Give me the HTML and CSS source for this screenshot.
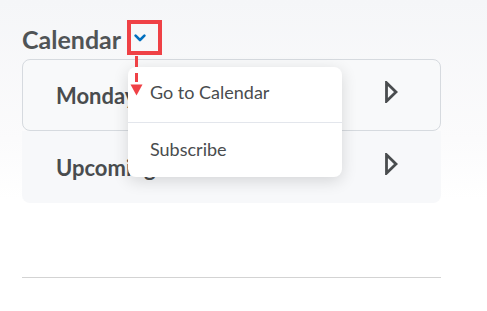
FILE: index.html
```html
<!DOCTYPE html>
<html lang="en">
<head>
<meta charset="utf-8">
<title>Calendar</title>
<link rel="stylesheet" href="styles.css">
</head>
<body>
<div class="page">
  <div class="header">
    <h2 class="title">Calendar</h2>
    <button class="menu-btn" aria-label="Calendar options">
      <svg width="12" height="8" viewBox="0 0 12 8"><path d="M1.6 1.6 L6 6 L10.4 1.6" fill="none" stroke="#006fbf" stroke-width="2.6" stroke-linecap="round" stroke-linejoin="round"/></svg>
    </button>
  </div>
  <div class="list">
    <div class="row row-first">
      <span class="row-label">Monday, June 5</span>
      <svg class="tri" width="13" height="22" viewBox="0 0 13 22"><path d="M1.5 1.8 L11 11 L1.5 20.2 Z" fill="none" stroke="#494c4e" stroke-width="2.8" stroke-linejoin="miter"/></svg>
    </div>
    <div class="row row-second">
      <span class="row-label">Upcoming Events</span>
      <svg class="tri" width="13" height="22" viewBox="0 0 13 22"><path d="M1.5 1.8 L11 11 L1.5 20.2 Z" fill="none" stroke="#494c4e" stroke-width="2.8" stroke-linejoin="miter"/></svg>
    </div>
  </div>
  <div class="divider"></div>

  <div class="menu">
    <div class="menu-item">Go to Calendar</div>
    <div class="menu-item">Subscribe</div>
  </div>

  <div class="annot-box"></div>
  <svg class="annot-arrow" width="14" height="40" viewBox="0 0 14 40">
    <line x1="6.5" y1="0" x2="6.5" y2="29" stroke="#ef4146" stroke-width="3" stroke-dasharray="11 6 9 3"/>
    <polygon points="0.5,28.5 12.5,28.5 6.5,39.5" fill="#ef4146"/>
  </svg>
</div>
</body>
</html>
```

FILE: styles.css
```css
html, body {
  margin: 0;
  padding: 0;
}
body {
  width: 487px;
  height: 311px;
  overflow: hidden;
  background: linear-gradient(#f5f6f8 0px, #fbfbfc 140px, #ffffff 200px);
  font-family: Lato, "Noto Sans", sans-serif;
  color: #494c4e;
}
.page {
  position: relative;
  padding: 20px 46px 0 22px;
  height: 291px;
}
.header {
  display: flex;
  align-items: center;
  height: 36px;
}
.title {
  margin: 0;
  font-size: 25px;
  font-weight: 700;
  line-height: 36px;
  color: #505456;
  padding-top: 2px;
}
.menu-btn {
  margin-left: 7px;
  width: 24px;
  height: 24px;
  padding: 0;
  border: none;
  background: transparent;
  display: flex;
  align-items: center;
  justify-content: center;
}
.list {
  margin-top: 3px;
}
.row {
  box-sizing: border-box;
  height: 72px;
  display: flex;
  align-items: center;
  justify-content: space-between;
  padding: 0 42px 0 33px;
}
.row-first {
  border: 1px solid #d6dadf;
  border-radius: 8px;
  background: #f8f9fa;
}
.row-second {
  padding-left: 34px;
  padding-right: 43px;
  border-radius: 0 0 8px 8px;
  background: #f7f8fa;
}
.row-label {
  font-size: 22px;
  font-weight: 700;
  color: #494c4e;
}
.tri {
  display: block;
  margin-bottom: 7px;
}
.divider {
  margin-top: 74px;
  height: 1px;
  background: #d3d3d3;
}
.menu {
  position: absolute;
  left: 128px;
  top: 67px;
  width: 214px;
  background: #ffffff;
  border-radius: 8px;
  box-shadow: 0 4px 16px rgba(0, 0, 0, 0.14);
}
.menu-item {
  height: 55px;
  box-sizing: border-box;
  display: flex;
  align-items: center;
  padding-left: 22px;
  padding-bottom: 6px;
  font-size: 18px;
  color: #494c4e;
}
.menu-item + .menu-item {
  border-top: 1px solid #e3e6ec;
  padding-bottom: 3px;
}
.annot-box {
  position: absolute;
  left: 127px;
  top: 20px;
  width: 35px;
  height: 35px;
  box-sizing: border-box;
  border: 4px solid #ef4146;
}
.annot-arrow {
  position: absolute;
  left: 130px;
  top: 56px;
}
```
